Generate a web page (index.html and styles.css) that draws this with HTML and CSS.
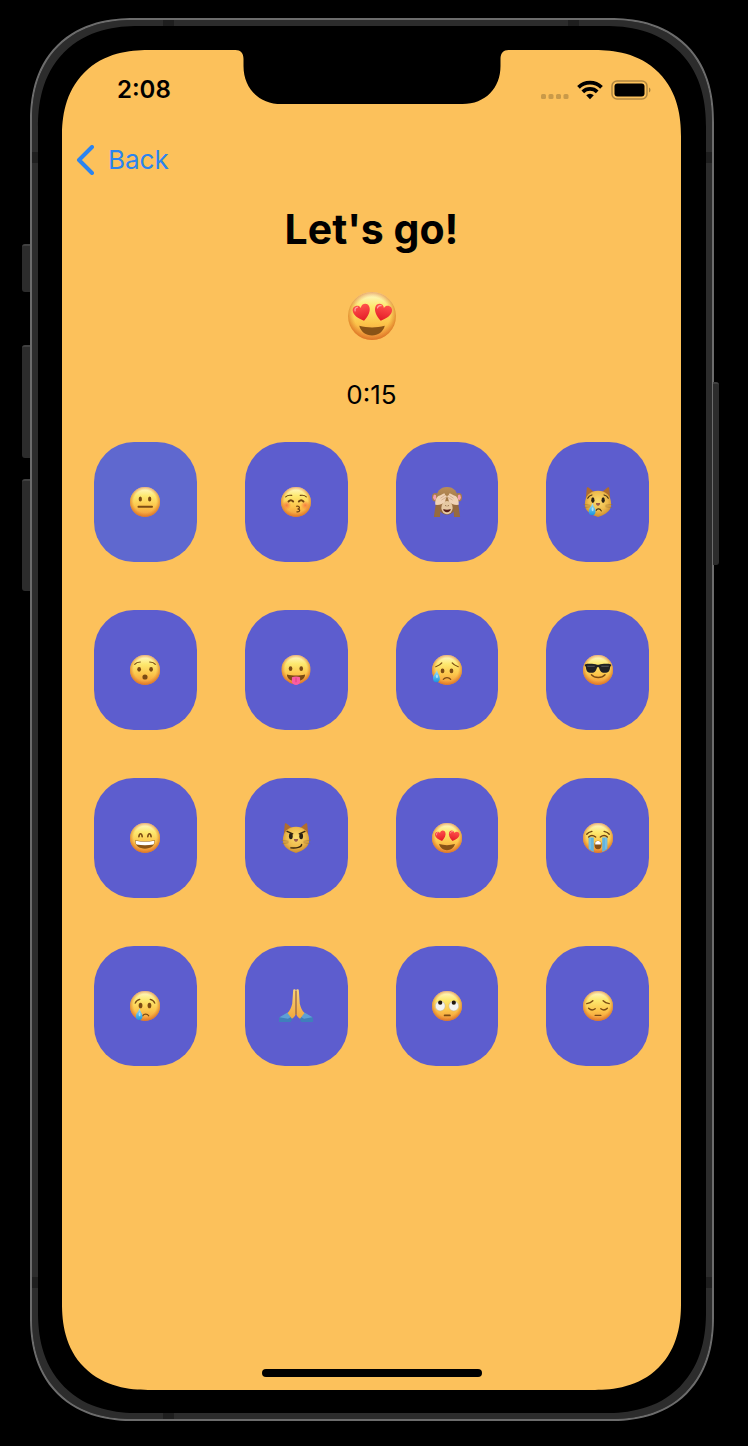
FILE: index.html
```html
<!DOCTYPE html>
<html lang="en">
<head>
<meta charset="utf-8">
<meta name="viewport" content="width=device-width, initial-scale=1">
<title>Let's go!</title>
<link rel="stylesheet" href="styles.css">
</head>
<body>
<svg class="sprite" aria-hidden="true">
  <defs>
    <linearGradient id="skin" x1="0" y1="0" x2="0" y2="1">
      <stop offset="0" stop-color="#fffad0"/><stop offset=".3" stop-color="#fde96f"/><stop offset=".65" stop-color="#fcc54b"/><stop offset="1" stop-color="#f2943a"/>
    </linearGradient>
    <radialGradient id="rim" cx=".5" cy=".48" r=".52">
      <stop offset=".72" stop-color="#e0792a" stop-opacity="0"/><stop offset="1" stop-color="#d4691f" stop-opacity=".75"/>
    </radialGradient>
    <linearGradient id="heartFill" x1="0" y1="0" x2="0" y2="1">
      <stop offset="0" stop-color="#ff524c"/><stop offset="1" stop-color="#e31a26"/>
    </linearGradient>
    <linearGradient id="tear" x1="0" y1="0" x2="0" y2="1">
      <stop offset="0" stop-color="#a4e2f8"/><stop offset="1" stop-color="#1795e0"/>
    </linearGradient>
    <radialGradient id="catFur" cx=".5" cy=".4" r=".6">
      <stop offset="0" stop-color="#fbdd70"/><stop offset=".6" stop-color="#eebb4c"/><stop offset="1" stop-color="#c98a2e"/>
    </radialGradient>
    <linearGradient id="monkeyFur" x1="0" y1="0" x2="0" y2="1">
      <stop offset="0" stop-color="#b98d57"/><stop offset="1" stop-color="#8c6239"/>
    </linearGradient>
    <linearGradient id="hand" x1="0" y1="0" x2="0" y2="1">
      <stop offset="0" stop-color="#fcd375"/><stop offset="1" stop-color="#f0a73e"/>
    </linearGradient>
    <radialGradient id="blush"><stop offset="0" stop-color="#f5603c" stop-opacity=".7"/><stop offset="1" stop-color="#f5603c" stop-opacity="0"/></radialGradient>
  </defs>
  <symbol id="face" viewBox="0 0 64 64"><circle cx="32" cy="32" r="32" fill="url(#skin)"/><circle cx="32" cy="32" r="32" fill="url(#rim)"/></symbol>
  <symbol id="heart" viewBox="0 0 24 24"><path d="M12 23C5 18 1 13 1 8c0-7 9-8 11-2 2-6 11-5 11 2 0 5-4 10-11 15z" fill="url(#heartFill)"/><path d="M4 8c0-3 2-4 4-4" fill="none" stroke="#ffa6a0" stroke-width="1.500" stroke-linecap="round"/></symbol>
  <symbol id="drop" viewBox="0 0 16 26"><path d="M9 0c1 7 6 11 6 17a7 8 0 0 1-14 0C1 11 7 7 9 0z" fill="url(#tear)"/><ellipse cx="9" cy="13" rx="2" ry="4" fill="#c9f1ff" opacity=".7"/></symbol>
  <symbol id="neutral" viewBox="0 0 64 64"><use href="#face"/><g fill="#7b4b14"><ellipse cx="22" cy="25.500" rx="3.500" ry="5.500"/><ellipse cx="42" cy="25.500" rx="3.500" ry="5.500"/><rect x="16" y="40" width="33" height="4" rx="2"/></g></symbol>
  <symbol id="kiss" viewBox="0 0 64 64"><use href="#face"/><circle cx="12" cy="39" r="10" fill="url(#blush)"/><circle cx="52" cy="39" r="10" fill="url(#blush)"/><g fill="none" stroke="#714512" stroke-linecap="round" stroke-width="2.500"><path d="M10 21c3-3 8-4 13-3M41 18c5-1 10 0 13 3"/><path d="M16 31c3-3 7-3 10 0M38 31c3-3 7-3 10 0" stroke-width="4"/><path d="M33 41c8-1 8 6 2 6 7 0 6 7-1 6"/></g></symbol>
  <symbol id="monkey" viewBox="0 0 64 64"><ellipse cx="7" cy="22" rx="7" ry="9" fill="#a77b4a"/><ellipse cx="57" cy="22" rx="7" ry="9" fill="#a77b4a"/><ellipse cx="6" cy="22" rx="3.500" ry="6" fill="#f49fae"/><ellipse cx="58" cy="22" rx="3.500" ry="6" fill="#f49fae"/><path d="M32 0c15 0 23 10 23 27S46 59 32 59 9 44 9 27 17 0 32 0z" fill="url(#monkeyFur)"/><ellipse cx="32" cy="44" rx="12" ry="14" fill="#e6c8a2"/><path d="M24 47c5 2 11 2 16 0 0 9-16 9-16 0z" fill="#571d18"/><path d="M29 39l1 2m5-2-1 2" stroke="#69431f" stroke-width="2"/><path d="M8 36l11 3-2 25H4zM56 36l-11 3 2 25h13z" fill="#966a3e"/><path d="M7 38c-1-12 4-19 10-20l8-4c3-1 4 1 2 3l3 1c2 1 2 3 0 5l-2 8c-4 5-12 8-21 7zM57 38c1-12-4-19-10-20l-8-4c-3-1-4 1-2 3l-3 1c-2 1-2 3 0 5l2 8c4 5 12 8 21 7z" fill="#f0d2b5"/><path d="M18 24l9-6M20 28l10-6M46 24l-9-6M44 28l-10-6" stroke="#c9a383" stroke-width="1.500"/></symbol>
  <symbol id="catHead" viewBox="0 0 64 64"><path d="M6 24 8 3c0-3 3-3 5-1l11 9h16l11-9c2-2 5-2 5 1l2 21z" fill="#b06d2c"/><path d="M32 8c18 0 28 12 28 29 0 15-13 22-28 27C17 59 4 52 4 37 4 20 14 8 32 8z" fill="url(#catFur)"/><path d="M1 37l15 2M2 44l14-2M63 37l-15 2M62 44l-14-2" stroke="#9b7638" stroke-width="1.500" opacity=".8"/><path d="M28 34h8c2 2-2 6-4 6s-6-4-4-6z" fill="#9a594b"/></symbol>
  <symbol id="catCry" viewBox="0 0 64 64"><use href="#catHead"/><g fill="#2a2116"><ellipse cx="21" cy="28" rx="3.500" ry="6"/><ellipse cx="43" cy="28" rx="3.500" ry="6"/></g><path d="M10 24c2-4 5-6 9-7M54 24c-2-4-5-6-9-7M28 50c2-5 9-4 11 1" fill="none" stroke="#4a3614" stroke-width="2.500" stroke-linecap="round"/><use href="#drop" x="11" y="34" width="17" height="27"/></symbol>
  <symbol id="catSmirk" viewBox="0 0 64 64"><use href="#catHead"/><g fill="#2a2116"><ellipse cx="21" cy="28" rx="4" ry="6.500"/><ellipse cx="43" cy="28" rx="4" ry="6.500"/></g><path d="M13 18l12 5M51 18l-12 5M21 53c12 1 23-1 23-7" fill="none" stroke="#37270f" stroke-width="3" stroke-linecap="round"/></symbol>
  <symbol id="hushed" viewBox="0 0 64 64"><use href="#face"/><g fill="#7b4b14"><ellipse cx="19.500" cy="30.500" rx="4" ry="5"/><ellipse cx="45" cy="30.500" rx="4" ry="5"/><circle cx="32" cy="47" r="5.500"/></g><path d="M10 20c3-4 7-5 12-5M54 20c-3-4-7-5-12-5" fill="none" stroke="#7b4b14" stroke-width="2.500" stroke-linecap="round"/></symbol>
  <symbol id="tongue" viewBox="0 0 64 66"><use href="#face" width="64" height="64"/><g fill="#7b4b14"><ellipse cx="20" cy="30" rx="4" ry="5"/><ellipse cx="43.500" cy="30" rx="4" ry="5"/><path d="M12 43c12 3 28 3 40 0 0 9-9 15-20 15s-20-6-20-15z"/></g><path d="M23 49c5-2 13-2 18 0v10c0 9-18 9-18 0z" fill="#fb5da1"/><path d="M32 50v10" stroke="#d63c80" stroke-width="2"/></symbol>
  <symbol id="sweat" viewBox="0 0 64 64"><use href="#face"/><g fill="#7b4b14"><ellipse cx="22.500" cy="34" rx="4" ry="5"/><ellipse cx="41.500" cy="34" rx="4" ry="5"/></g><path d="M8 25c6-2 10-4 13-8M56 25c-6-2-10-4-13-8M24 52c4-5 12-5 16 0" fill="none" stroke="#7b4b14" stroke-width="2.500" stroke-linecap="round"/><use href="#drop" x="1" y="32" width="17" height="27"/></symbol>
  <symbol id="cool" viewBox="0 0 64 64"><use href="#face"/><path d="M4 20c9-2 20-1 26 1h4c6-2 17-3 26-1v3l-2 2c-1 9-3 13-12 13-8 0-10-5-12-12h-4c-2 7-4 12-12 12-9 0-11-4-12-13l-2-2z" fill="#202124"/><path d="M9 24h16M39 24h16" stroke="#5b5e62" stroke-width="2"/><path d="M18 42c7 8 22 8 29 0" fill="none" stroke="#7b4b14" stroke-width="3" stroke-linecap="round"/></symbol>
  <symbol id="grin" viewBox="0 0 64 64"><use href="#face"/><path d="M19 29c1-8 6-8 7 0M38 29c1-8 6-8 7 0" fill="none" stroke="#7b4b14" stroke-width="3.500" stroke-linecap="round"/><path d="M11 37c13 3 29 3 42 0 1 11-9 18-21 18S10 48 11 37z" fill="#8b5416"/><path d="M12 38c13 3 27 3 40 0 0 3 0 5-2 8-12 2-24 2-36 0-2-3-2-5-2-8z" fill="#fff"/></symbol>
  <symbol id="love" viewBox="0 0 64 64"><use href="#face"/><use href="#heart" x="6" y="15" width="25" height="25" transform="rotate(-14 18 27)"/><use href="#heart" x="34" y="15" width="25" height="25" transform="rotate(14 47 27)"/><path d="M15 45c11 3 23 3 34 0-2 8-9 13-17 13s-15-5-17-13z" fill="#895316"/></symbol>
  <symbol id="sob" viewBox="0 0 64 64"><use href="#face"/><path d="M12 31h11v31c-5-2-8-4-11-7zM41 31h11v24c-3 3-6 5-11 7z" fill="#62b4df"/><path d="M15 31v24M49 31v24" stroke="#8ccbe8" stroke-width="2"/><path d="M8 24c3-4 7-5 11-6M56 24c-3-4-7-5-11-6M12 30c4-4 10-4 15 0M37 30c5-4 11-4 15 0" fill="none" stroke="#714512" stroke-width="3" stroke-linecap="round"/><ellipse cx="32" cy="47" rx="7.500" ry="9" fill="#85501a"/><path d="M26 42c1-5 11-5 12 0v4H26z" fill="#fff"/></symbol>
  <symbol id="cry" viewBox="0 0 64 64"><use href="#face"/><g fill="#7b4b14"><ellipse cx="22.500" cy="31" rx="4" ry="6"/><ellipse cx="41.500" cy="31" rx="4" ry="6"/></g><path d="M11 26c2-5 5-7 10-8M53 26c-2-5-5-7-10-8M27 53c3-5 10-5 13 0" fill="none" stroke="#7b4b14" stroke-width="2.500" stroke-linecap="round"/><use href="#drop" x="11" y="37" width="17" height="26"/></symbol>
  <symbol id="pray" viewBox="0 0 72 70"><path d="M0 60l18-11 11 12-4 8H0zM72 60L54 49 43 61l4 8h25z" fill="#3f7fbb"/><path d="M1 59l17-10 8 9-7 4zM71 59L54 49l-8 9 7 4z" fill="#5e9fd5"/><path d="M35.500 1v51c-1 4-4 7-8 10L18 50c5-5 8-12 10-20l2-28c0-3 5-3 5.500-1z" fill="url(#hand)"/><path d="M36.500 1v51c1 4 4 7 8 10L54 50c-5-5-8-12-10-20L42 2c0-3-5-3-5.500-1z" fill="url(#hand)"/><path d="M36 3v50" stroke="#9e5c20" stroke-width="2"/></symbol>
  <symbol id="roll" viewBox="0 0 64 64"><use href="#face"/><g fill="#f4f4f1" stroke="#b9ad96"><circle cx="17.500" cy="32" r="10.500"/><circle cx="46.500" cy="32" r="10.500"/></g><g fill="#23180f"><circle cx="17.500" cy="25" r="4.500"/><circle cx="46.500" cy="25" r="4.500"/></g><rect x="25" y="50" width="15" height="4" rx="2" fill="#7b4b14"/></symbol>
  <symbol id="pensive" viewBox="0 0 64 64"><use href="#face"/><path d="M8 27c6-1 10-3 13-6M56 27c-6-1-10-3-13-6M12 37c4 4 9 5 14 1M38 38c5 4 10 3 14-1M26 52h12" fill="none" stroke="#7b4b14" stroke-width="3" stroke-linecap="round"/></symbol>
</svg>

<div class="phone">
  <span class="key key-mute"></span><span class="key key-up"></span><span class="key key-down"></span><span class="key key-power"></span>
  <span class="band band-tl"></span><span class="band band-tr"></span><span class="band band-bl"></span>
  <span class="band side-tl"></span><span class="band side-tr"></span><span class="band side-bl"></span><span class="band side-br"></span>
  <div class="screen">
    <svg class="notch" viewBox="0 0 273 54" aria-hidden="true"><path d="M0 0C5 0 8 3 8 9v7C8 38 23 54 46 54h181c23 0 38-16 38-38V9c0-6 3-9 8-9z"/></svg>
    <header class="status">
      <span class="clock">2:08</span>
      <div class="indicators">
        <svg width="28" height="20" viewBox="0 0 28 20" aria-hidden="true"><g fill="#c99a49"><rect y="14" width="5" height="5" rx="1.500"/><rect x="7.500" y="14" width="5" height="5" rx="1.500"/><rect x="15" y="14" width="5" height="5" rx="1.500"/><rect x="22.500" y="14" width="5" height="5" rx="1.500"/></g></svg>
        <svg width="26" height="20" viewBox="0 0 26 20" aria-label="Wi-Fi"><g fill="none" stroke="#000" stroke-width="3.800"><path d="M1.500 7.300a16.300 16.300 0 0 1 23 0"/><path d="M5.800 11.900a10.300 10.300 0 0 1 14.400 0"/></g><path d="M13 19.200l-3.800-3.900a5.500 5.500 0 0 1 7.600 0z"/></svg>
        <svg width="40" height="20" viewBox="0 0 40 20" aria-label="Battery"><rect x="1" y="1" width="35" height="18" rx="5" fill="none" stroke="#b08740" stroke-width="1.500"/><rect x="3.500" y="3.500" width="30" height="13" rx="3"/><path d="M38 7.500c2 1 2 4 0 5z" fill="#a67f3c"/></svg>
      </div>
    </header>
    <nav class="nav">
      <button class="back" type="button"><svg width="18" height="30" viewBox="0 0 18 30" aria-hidden="true"><path d="M16 2 3 15l13 13" fill="none" stroke="#2b84f0" stroke-width="4" stroke-linecap="round" stroke-linejoin="round"/></svg>Back</button>
    </nav>
    <main class="game">
      <h1 class="title">Let's go!</h1>
      <svg class="target" role="img" aria-label="Heart eyes"><use href="#love"/></svg>
      <p class="timer">0:15</p>
      <div class="board">
        <button class="card card-active" type="button" aria-label="Neutral face"><svg class="emoji"><use href="#neutral"/></svg></button>
        <button class="card" type="button" aria-label="Kissing face"><svg class="emoji"><use href="#kiss"/></svg></button>
        <button class="card" type="button" aria-label="See-no-evil monkey"><svg class="emoji"><use href="#monkey"/></svg></button>
        <button class="card" type="button" aria-label="Crying cat"><svg class="emoji"><use href="#catCry"/></svg></button>
        <button class="card" type="button" aria-label="Hushed face"><svg class="emoji"><use href="#hushed"/></svg></button>
        <button class="card" type="button" aria-label="Face with tongue"><svg class="emoji"><use href="#tongue"/></svg></button>
        <button class="card" type="button" aria-label="Sad but relieved face"><svg class="emoji"><use href="#sweat"/></svg></button>
        <button class="card" type="button" aria-label="Sunglasses"><svg class="emoji"><use href="#cool"/></svg></button>
        <button class="card" type="button" aria-label="Grinning face"><svg class="emoji"><use href="#grin"/></svg></button>
        <button class="card" type="button" aria-label="Smirking cat"><svg class="emoji"><use href="#catSmirk"/></svg></button>
        <button class="card" type="button" aria-label="Heart eyes"><svg class="emoji"><use href="#love"/></svg></button>
        <button class="card" type="button" aria-label="Sobbing face"><svg class="emoji"><use href="#sob"/></svg></button>
        <button class="card" type="button" aria-label="Crying face"><svg class="emoji"><use href="#cry"/></svg></button>
        <button class="card" type="button" aria-label="Folded hands"><svg class="emoji emoji-wide"><use href="#pray"/></svg></button>
        <button class="card" type="button" aria-label="Rolling eyes"><svg class="emoji"><use href="#roll"/></svg></button>
        <button class="card" type="button" aria-label="Pensive face"><svg class="emoji"><use href="#pensive"/></svg></button>
      </div>
    </main>
    <div class="home-bar"></div>
  </div>
</div>
</body>
</html>
```

FILE: styles.css
```css
* { box-sizing: border-box; }

body {
  margin: 0;
  min-height: 100vh;
  padding: 18px 34px 25px 30px;
  display: flex;
  background: #000;
  color: #000;
  font-family: Inter, "Liberation Sans", sans-serif;
}

button { font: inherit; border: 0; padding: 0; }

.sprite { position: absolute; width: 0; height: 0; }

/* Device shell */
.phone {
  position: relative;
  flex: 1;
  display: flex;
  padding: 30px 31px 29px 30px;
  border: 2px solid #6c6c6c;
  border-radius: 104px;
  corner-shape: superellipse(1.2);
  background: #000;
  box-shadow: inset 0 0 0 6px #2c2c2c;
}

.key { position: absolute; width: 8px; background: #2c2c2c; border-top: 2px solid #414141; border-radius: 3px 0 0 3px; left: -10px; }
.key-mute { top: 224px; height: 48px; }
.key-up { top: 325px; height: 113px; }
.key-down { top: 459px; height: 112px; }
.key-power { left: auto; right: -7px; width: 6px; top: 362px; height: 183px; border-radius: 0 3px 3px 0; }

.band { position: absolute; width: 11px; height: 6px; background: #1e1e1e; }
.band-tl { top: 0; left: 131px; }
.band-tr { top: 0; right: 133px; }
.band-bl { bottom: 0; left: 131px; }
.side-tl, .side-tr, .side-bl, .side-br { width: 6px; height: 11px; }
.side-tl { left: 0; top: 132px; }
.side-tr { right: 0; top: 132px; }
.side-bl { left: 0; bottom: 131px; }
.side-br { right: 0; bottom: 131px; }

.screen {
  position: relative;
  flex: 1;
  display: flex;
  flex-direction: column;
  overflow: hidden;
  padding-bottom: 13px;
  border-radius: 86px;
  corner-shape: superellipse(1.2);
  background: #fcc15b;
}

.notch { position: absolute; top: 0; left: 50%; width: 273px; height: 54px; transform: translateX(-50%); }

.status {
  height: 80px;
  padding: 0 30px 0 55px;
  display: flex;
  align-items: center;
  justify-content: space-between;
}
.clock { font-size: 24px; font-weight: 600; line-height: 32px; }
.indicators { display: flex; gap: 8px; }

.nav { height: 60px; padding-left: 14px; display: flex; align-items: center; }
.back { display: flex; align-items: center; gap: 14px; background: none; color: #2b84f0; font-size: 26px; line-height: 32px; }

.game { flex: 1; display: flex; flex-direction: column; align-items: center; padding: 14px 32px 48px; }
.title { margin: 0; font-size: 41px; line-height: 50px; font-weight: 700; }
.target { width: 48px; height: 48px; margin-top: 38px; }
.timer { margin: 40px 0 32px; font-size: 26px; line-height: 30px; }

.board { width: 100%; display: grid; grid-template-columns: repeat(4, 1fr); gap: 48px; }
.card {
  height: 120px;
  display: flex;
  align-items: center;
  justify-content: center;
  border-radius: 40px;
  background: #5d5dce;
}
.card-active { background: #5f68cf; }
.emoji { width: 30px; height: 30px; }
.emoji-wide { width: 34px; height: 34px; }

.home-bar { width: 220px; height: 8px; margin: 0 auto; border-radius: 4px; background: #000; }
```
